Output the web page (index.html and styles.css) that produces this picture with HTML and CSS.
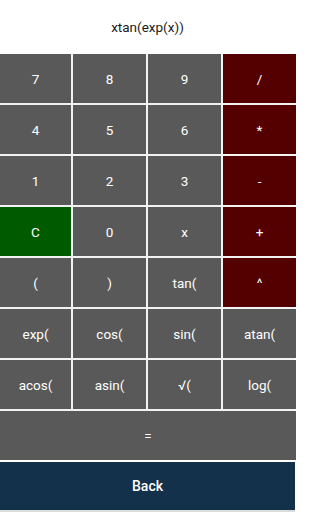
FILE: index.html
```html
<!DOCTYPE html>
<html>
<head>
<meta charset="utf-8">
<link rel="stylesheet" href="styles.css">
</head>
<body>
<div class="app">
  <div class="display">xtan(exp(x))</div>
  <div class="keys">
    <div class="key">7</div><div class="key">8</div><div class="key">9</div><div class="key op">/</div>
    <div class="key">4</div><div class="key">5</div><div class="key">6</div><div class="key op">*</div>
    <div class="key">1</div><div class="key">2</div><div class="key">3</div><div class="key op">-</div>
    <div class="key clear">C</div><div class="key">0</div><div class="key">x</div><div class="key op">+</div>
    <div class="key">(</div><div class="key">)</div><div class="key">tan(</div><div class="key op">^</div>
    <div class="key">exp(</div><div class="key">cos(</div><div class="key">sin(</div><div class="key">atan(</div>
    <div class="key">acos(</div><div class="key">asin(</div><div class="key">√(</div><div class="key">log(</div>
    <div class="key equals">=</div>
  </div>
  <div class="back">Back</div>
  <div class="bottom"></div>
</div>
</body>
</html>
```

FILE: styles.css
```css
html, body {
  margin: 0;
  padding: 0;
  background: #ffffff;
}
.app {
  width: 295px;
  height: 512px;
  display: flex;
  flex-direction: column;
  font-family: Roboto, "Liberation Sans", sans-serif;
}
.display {
  height: 54px;
  display: flex;
  align-items: center;
  justify-content: center;
  font-size: 13.5px;
  color: #1a1a1a;
}
.keys {
  display: grid;
  grid-template-columns: 71px 73px 73px 73px;
  grid-auto-rows: 49px;
  column-gap: 2px;
  row-gap: 2px;
  background: #f2f2f2;
}
.key {
  background: #595959;
  color: #ffffff;
  font-size: 13.5px;
  display: flex;
  align-items: center;
  justify-content: center;
}
.key.op {
  background: #550000;
}
.key.clear {
  background: #005b00;
}
.key.equals {
  grid-column: 1 / 5;
}
.back {
  margin-top: 2px;
  height: 48px;
  background: #13314b;
  color: #ffffff;
  font-size: 14px;
  font-weight: 500;
  display: flex;
  align-items: center;
  justify-content: center;
}
.bottom {
  flex: 1;
  background: #dcdcdc;
}
```
